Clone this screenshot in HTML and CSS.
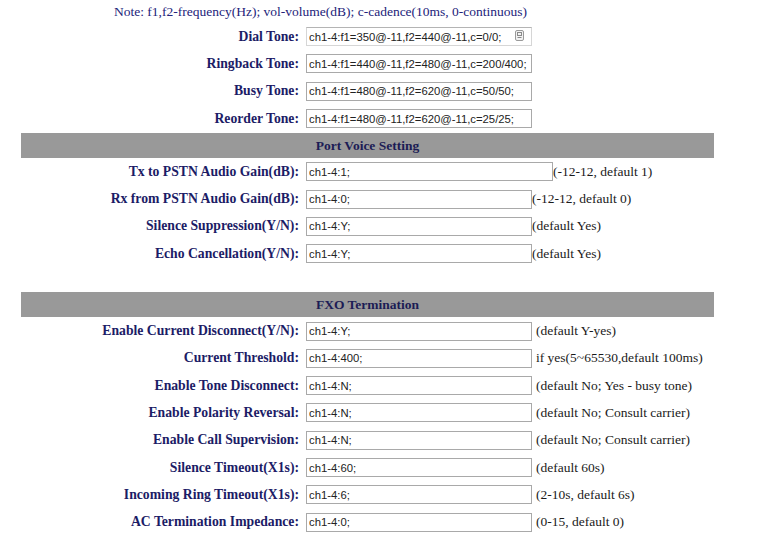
FILE: index.html
```html
<!DOCTYPE html>
<html lang="en">
<head>
    <meta charset="UTF-8">
    <title>Port Settings</title>
    <link rel="stylesheet" href="styles.css">
</head>
<body>

<div class="settings">
    <div class="note">Note: f1,f2-frequency(Hz); vol-volume(dB); c-cadence(10ms, 0-continuous)</div>

    <div class="row">
        <label for="dial_tone">Dial Tone:</label>
        <div class="field">
            <span class="input-wrap">
                <input type="text" id="dial_tone" class="focused" value="ch1-4:f1=350@-11,f2=440@-11,c=0/0;">
                <svg class="fill-icon" width="9" height="11" viewBox="0 0 9 11">
                    <rect x="0.5" y="0.5" width="8" height="10" rx="1.5" fill="#f2f2f2" stroke="#9a9a9a"/>
                    <rect x="2.5" y="2.5" width="4" height="3" fill="none" stroke="#8a8a8a"/>
                    <line x1="2.5" y1="7.5" x2="6.5" y2="7.5" stroke="#8a8a8a"/>
                </svg>
            </span>
        </div>
    </div>
    <div class="row">
        <label for="ringback_tone">Ringback Tone:</label>
        <div class="field"><input type="text" id="ringback_tone" value="ch1-4:f1=440@-11,f2=480@-11,c=200/400;"></div>
    </div>
    <div class="row">
        <label for="busy_tone">Busy Tone:</label>
        <div class="field"><input type="text" id="busy_tone" value="ch1-4:f1=480@-11,f2=620@-11,c=50/50;"></div>
    </div>
    <div class="row">
        <label for="reorder_tone">Reorder Tone:</label>
        <div class="field"><input type="text" id="reorder_tone" value="ch1-4:f1=480@-11,f2=620@-11,c=25/25;"></div>
    </div>

    <div class="section-title">Port Voice Setting</div>

    <div class="row">
        <label for="tx_gain">Tx to PSTN Audio Gain(dB):</label>
        <div class="field"><input type="text" id="tx_gain" class="wide" value="ch1-4:1;"><span class="hint">(-12-12, default 1)</span></div>
    </div>
    <div class="row">
        <label for="rx_gain">Rx from PSTN Audio Gain(dB):</label>
        <div class="field"><input type="text" id="rx_gain" value="ch1-4:0;"><span class="hint">(-12-12, default 0)</span></div>
    </div>
    <div class="row">
        <label for="silence_supp">Silence Suppression(Y/N):</label>
        <div class="field"><input type="text" id="silence_supp" value="ch1-4:Y;"><span class="hint">(default Yes)</span></div>
    </div>
    <div class="row">
        <label for="echo_cancel">Echo Cancellation(Y/N):</label>
        <div class="field"><input type="text" id="echo_cancel" value="ch1-4:Y;"><span class="hint">(default Yes)</span></div>
    </div>

    <div class="spacer"></div>

    <div class="section-title">FXO Termination</div>

    <div class="row">
        <label for="cur_disc">Enable Current Disconnect(Y/N):</label>
        <div class="field"><input type="text" id="cur_disc" value="ch1-4:Y;"><span class="hint spaced">(default Y-yes)</span></div>
    </div>
    <div class="row">
        <label for="cur_thresh">Current Threshold:</label>
        <div class="field"><input type="text" id="cur_thresh" value="ch1-4:400;"><span class="hint spaced">if yes(5~65530,default 100ms)</span></div>
    </div>
    <div class="row">
        <label for="tone_disc">Enable Tone Disconnect:</label>
        <div class="field"><input type="text" id="tone_disc" value="ch1-4:N;"><span class="hint spaced">(default No; Yes - busy tone)</span></div>
    </div>
    <div class="row">
        <label for="polarity">Enable Polarity Reversal:</label>
        <div class="field"><input type="text" id="polarity" value="ch1-4:N;"><span class="hint spaced">(default No; Consult carrier)</span></div>
    </div>
    <div class="row">
        <label for="call_sup">Enable Call Supervision:</label>
        <div class="field"><input type="text" id="call_sup" value="ch1-4:N;"><span class="hint spaced">(default No; Consult carrier)</span></div>
    </div>
    <div class="row">
        <label for="silence_timeout">Silence Timeout(X1s):</label>
        <div class="field"><input type="text" id="silence_timeout" value="ch1-4:60;"><span class="hint spaced">(default 60s)</span></div>
    </div>
    <div class="row">
        <label for="ring_timeout">Incoming Ring Timeout(X1s):</label>
        <div class="field"><input type="text" id="ring_timeout" value="ch1-4:6;"><span class="hint spaced">(2-10s, default 6s)</span></div>
    </div>
    <div class="row">
        <label for="ac_imp">AC Termination Impedance:</label>
        <div class="field"><input type="text" id="ac_imp" value="ch1-4:0;"><span class="hint spaced">(0-15, default 0)</span></div>
    </div>
</div>

</body>
</html>
```

FILE: styles.css
```css
body {
    margin: 0;
    background-color: #ffffff;
    font-family: "Liberation Serif", "Times New Roman", serif;
    font-size: 13.5px;
}
.settings {
    width: 693px;
    margin-left: 21px;
}
.note {
    height: 23px;
    line-height: 23px;
    padding-left: 93px;
    color: #23237a;
}
.row {
    display: grid;
    grid-template-columns: 285px 1fr;
    align-items: center;
    height: 27.3px;
}
.row label {
    text-align: right;
    padding-right: 7px;
    font-weight: bold;
    font-size: 13.7px;
    color: #1c1c66;
    white-space: nowrap;
}
.field {
    display: flex;
    align-items: center;
}
.input-wrap {
    position: relative;
    display: inline-block;
    height: 19px;
}
input[type="text"] {
    box-sizing: border-box;
    width: 226px;
    height: 19px;
    margin: 0;
    padding: 0 2px;
    border: 1px solid #a9a9a9;
    font-family: "Liberation Sans", Arial, sans-serif;
    font-size: 11.3px;
    color: #222;
    background-color: #fff;
}
input.wide {
    width: 247px;
}
input.focused {
    border-color: #d6d6d6;
    border-top-color: #b4b4b4;
    padding-right: 20px;
}
.fill-icon {
    position: absolute;
    right: 8px;
    top: 3px;
}
.hint {
    color: #1a1a1a;
    white-space: nowrap;
}
.hint.spaced {
    margin-left: 4px;
}
.section-title {
    height: 25px;
    line-height: 25px;
    margin-top: 1px;
    background-color: #999999;
    text-align: center;
    font-weight: bold;
    color: #1c1c55;
}
.spacer {
    height: 24px;
}
```
